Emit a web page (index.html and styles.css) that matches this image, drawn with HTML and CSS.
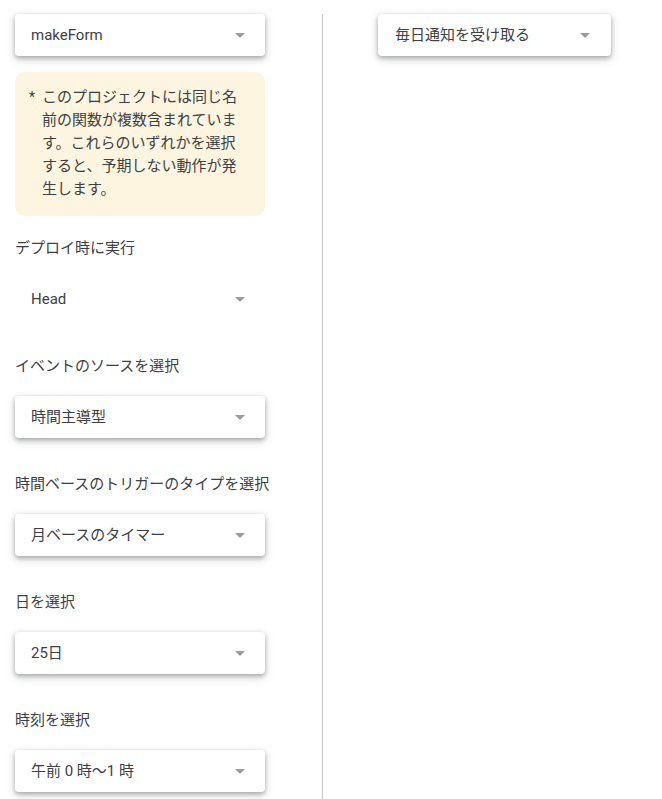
FILE: index.html
```html
<!DOCTYPE html>
<html lang="ja">
<head>
<meta charset="utf-8">
<title>Trigger</title>
<link rel="stylesheet" href="styles.css">
</head>
<body>
<div class="page">
  <div class="left">
    <div class="select raised">
      <span class="value">makeForm</span>
      <span class="arrow"></span>
    </div>
    <div class="note">
      <span class="star">*</span>
      <p class="note-text">このプロジェクトには同じ名前の関数が複数含まれています。これらのいずれかを選択すると、予期しない動作が発生します。</p>
    </div>
    <div class="field first">
      <div class="label">デプロイ時に実行</div>
      <div class="select flat">
        <span class="value">Head</span>
        <span class="arrow"></span>
      </div>
    </div>
    <div class="field">
      <div class="label">イベントのソースを選択</div>
      <div class="select raised">
        <span class="value">時間主導型</span>
        <span class="arrow"></span>
      </div>
    </div>
    <div class="field">
      <div class="label">時間ベースのトリガーのタイプを選択</div>
      <div class="select raised">
        <span class="value">月ベースのタイマー</span>
        <span class="arrow"></span>
      </div>
    </div>
    <div class="field">
      <div class="label">日を選択</div>
      <div class="select raised">
        <span class="value">25日</span>
        <span class="arrow"></span>
      </div>
    </div>
    <div class="field last">
      <div class="label">時刻を選択</div>
      <div class="select raised">
        <span class="value">午前 0 時～1 時</span>
        <span class="arrow"></span>
      </div>
    </div>
  </div>
  <div class="divider"></div>
  <div class="right">
    <div class="select raised wide">
      <span class="value">毎日通知を受け取る</span>
      <span class="arrow"></span>
    </div>
  </div>
</div>
</body>
</html>
```
FILE: styles.css
```css
html, body {
  margin: 0;
  padding: 0;
  background: #ffffff;
  overflow: hidden;
}
body {
  font-family: Roboto, "Noto Sans CJK JP", sans-serif;
  font-size: 15px;
  color: #3c4043;
}
.page {
  display: flex;
  align-items: stretch;
  padding-top: 14px;
  min-height: calc(100vh - 14px);
}
.left {
  width: 250px;
  margin-left: 15px;
  margin-right: 57px;
  display: flex;
  flex-direction: column;
}
.divider {
  width: 1px;
  background: #c8c6cc;
  flex: none;
}
.right {
  margin-left: 55px;
}
.select {
  height: 42px;
  box-sizing: border-box;
  display: flex;
  align-items: center;
  justify-content: space-between;
  padding: 0 20px 0 16px;
  border-radius: 4px;
  background: #ffffff;
}
.select.raised {
  box-shadow: 0 2px 4px rgba(60, 64, 67, 0.35), 0 3px 8px 1px rgba(60, 64, 67, 0.18);
}
.select.wide {
  width: 233px;
  padding-left: 17px;
  padding-right: 21px;
}
.value {
  line-height: 20px;
  color: #3c4043;
  white-space: nowrap;
}
.arrow {
  width: 0;
  height: 0;
  border-left: 5px solid transparent;
  border-right: 5px solid transparent;
  border-top: 5px solid #9a9a9a;
  flex: none;
}
.note {
  margin-top: 16px;
  background: #fdf5df;
  border-radius: 10px;
  padding: 14px 0 15px 14px;
  display: flex;
  line-height: 23px;
}
.star {
  width: 13px;
  flex: none;
  font-size: 14px;
}
.note-text {
  margin: 0;
  width: 200px;
  line-height: 23px;
}
.field {
  display: flex;
  flex-direction: column;
  margin-top: 36px;
}
.field.first {
  margin-top: 22px;
}
.label {
  line-height: 20px;
  margin-bottom: 20px;
  color: #3c4043;
  white-space: nowrap;
}
.select.flat {
  box-shadow: none;
}
```
